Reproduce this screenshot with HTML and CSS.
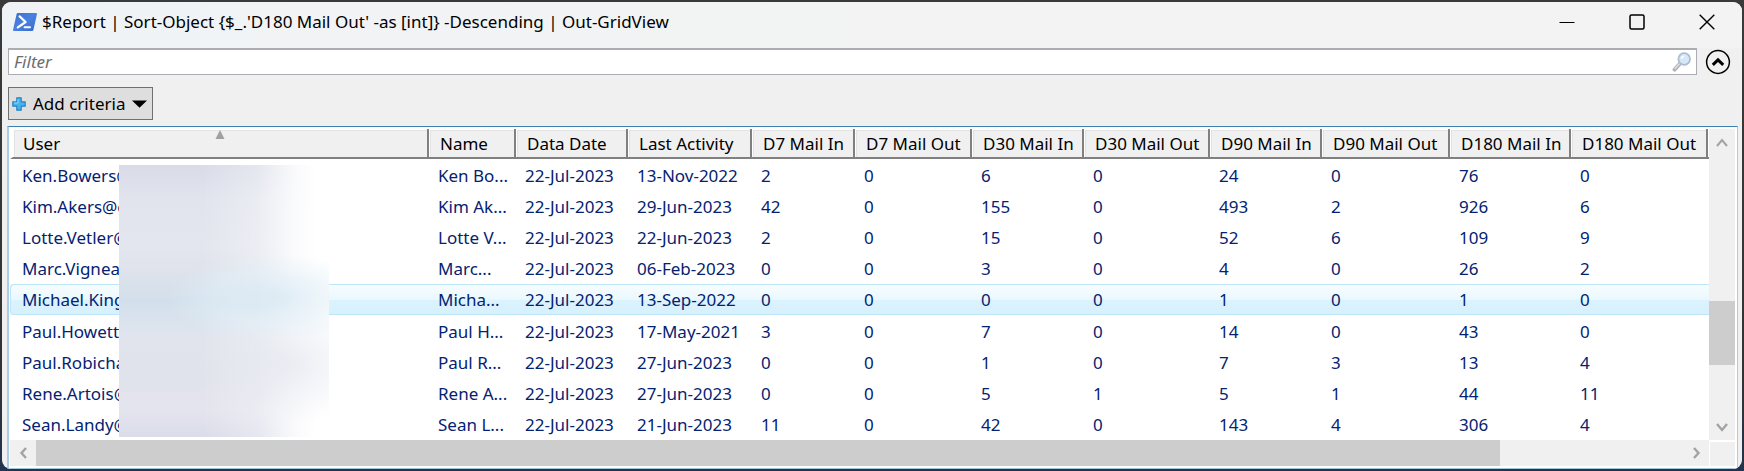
FILE: index.html
```html
<!DOCTYPE html>
<html lang="en">
<head>
<meta charset="utf-8">
<title>Out-GridView</title>
<link rel="stylesheet" href="styles.css">
</head>
<body>
<main class="window">
  <header class="titlebar">
    <svg class="app-icon" width="24" height="18" viewBox="0 0 24 18" aria-hidden="true">
      <defs><linearGradient id="ps" x1="0" y1="0" x2="1" y2="1"><stop offset="0" stop-color="#3c6fd0"/><stop offset="0.5" stop-color="#4a82e2"/><stop offset="1" stop-color="#3568c8"/></linearGradient></defs>
      <path d="M4.6 0H23.2Q24.2 0 24 1L20.4 17Q20.2 18 19.2 18H0.8Q-0.2 18 0 17L3.6 1Q3.8 0 4.6 0Z" fill="url(#ps)"/>
      <path d="M6.6 3.4L12.6 9L4.8 14.4" fill="none" stroke="#fff" stroke-width="2.2" stroke-linecap="round" stroke-linejoin="round"/>
      <path d="M11.6 14.2H17" stroke="#fff" stroke-width="2" stroke-linecap="round"/>
    </svg>
    <h1 class="title">$Report | Sort-Object {$_.'D180 Mail Out' -as [int]} -Descending | Out-GridView</h1>
    <div class="caption-buttons">
      <button class="caption" aria-label="Minimize"><svg width="16" height="16" viewBox="0 0 16 16"><path d="M0.5 8.5H15.5" stroke="#000" stroke-width="1.2"/></svg></button>
      <button class="caption" aria-label="Maximize"><svg width="16" height="16" viewBox="0 0 16 16"><rect x="1" y="1" width="14" height="14" rx="1.5" fill="none" stroke="#000" stroke-width="1.5"/></svg></button>
      <button class="caption" aria-label="Close"><svg width="16" height="16" viewBox="0 0 16 16"><path d="M0.7 0.7L15.3 15.3M15.3 0.7L0.7 15.3" stroke="#000" stroke-width="1.4"/></svg></button>
    </div>
  </header>

  <section class="filter-row">
    <div class="filter-box">
      <input class="filter" type="text" placeholder="Filter" aria-label="Filter">
      <svg class="lens" width="20" height="20" viewBox="0 0 20 20" aria-hidden="true">
        <path d="M2.6 17.6L7.6 12" stroke="#b4b4b8" stroke-width="4" stroke-linecap="round"/>
        <path d="M3 16.6L8.4 10.8" stroke="#dededf" stroke-width="1.4" stroke-linecap="round"/>
        <circle cx="12.2" cy="7" r="5.8" fill="#d5e8fa" stroke="#aebccb" stroke-width="1.8"/>
        <path d="M8.8 7Q9 3.6 12.4 3.4Q12 6 8.8 7Z" fill="#fff"/>
      </svg>
    </div>
    <button class="expander" aria-label="Collapse query panel"><svg width="26" height="26" viewBox="0 0 26 26"><circle cx="13" cy="13" r="11.4" fill="none" stroke="#000" stroke-width="1.5"/><path d="M7.8 15.8L13 10.8L18.2 15.8" fill="none" stroke="#000" stroke-width="3"/></svg></button>
  </section>

  <section class="criteria-row">
    <button class="criteria">
      <svg width="14" height="14" viewBox="0 0 14 14" aria-hidden="true"><path d="M4.8 0.8H9.2V4.8H13.2V9.2H9.2V13.2H4.8V9.2H0.8V4.8H4.8Z" fill="#45b4ee" stroke="#2584c4" stroke-width="1.2" stroke-linejoin="round"/><path d="M6 2V6H2" fill="none" stroke="#8bd4f8"/></svg>
      <span>Add criteria</span>
      <svg width="15" height="8" viewBox="0 0 15 8" aria-hidden="true"><path d="M0 0.4H15L7.5 7.8Z" fill="#000"/></svg>
    </button>
  </section>

  <section class="grid">
    <div class="viewport">
      <table class="table">
        <colgroup><col class="c-user"><col class="c-name"><col class="c-date"><col class="c-last"><col class="c-d7i"><col class="c-d7o"><col class="c-in"><col class="c-out"><col class="c-in"><col class="c-d90o"><col class="c-d180i"><col class="c-d180o"><col></colgroup>
        <thead><tr><th>User<svg class="sort" width="10" height="9" viewBox="0 0 10 9" aria-hidden="true"><path d="M5 0L9.5 9H0.5Z" fill="#a0a0a0"/></svg></th><th>Name</th><th>Data Date</th><th>Last Activity</th><th>D7 Mail In</th><th>D7 Mail Out</th><th>D30 Mail In</th><th>D30 Mail Out</th><th>D90 Mail In</th><th>D90 Mail Out</th><th>D180 Mail In</th><th>D180 Mail Out</th><td class="rest"></td></tr></thead>
        <tbody>
        <tr><td>Ken.Bowers@</td><td>Ken Bo...</td><td>22-Jul-2023</td><td>13-Nov-2022</td><td>2</td><td>0</td><td>6</td><td>0</td><td>24</td><td>0</td><td>76</td><td>0</td><td></td></tr>
        <tr><td>Kim.Akers@c</td><td>Kim Ak...</td><td>22-Jul-2023</td><td>29-Jun-2023</td><td>42</td><td>0</td><td>155</td><td>0</td><td>493</td><td>2</td><td>926</td><td>6</td><td></td></tr>
        <tr><td>Lotte.Vetler@</td><td>Lotte V...</td><td>22-Jul-2023</td><td>22-Jun-2023</td><td>2</td><td>0</td><td>15</td><td>0</td><td>52</td><td>6</td><td>109</td><td>9</td><td></td></tr>
        <tr><td>Marc.Vignea</td><td>Marc...</td><td>22-Jul-2023</td><td>06-Feb-2023</td><td>0</td><td>0</td><td>3</td><td>0</td><td>4</td><td>0</td><td>26</td><td>2</td><td></td></tr>
        <tr class="hover"><td>Michael.King</td><td>Micha...</td><td>22-Jul-2023</td><td>13-Sep-2022</td><td>0</td><td>0</td><td>0</td><td>0</td><td>1</td><td>0</td><td>1</td><td>0</td><td></td></tr>
        <tr><td>Paul.Howett@</td><td>Paul H...</td><td>22-Jul-2023</td><td>17-May-2021</td><td>3</td><td>0</td><td>7</td><td>0</td><td>14</td><td>0</td><td>43</td><td>0</td><td></td></tr>
        <tr><td>Paul.Robicha</td><td>Paul R...</td><td>22-Jul-2023</td><td>27-Jun-2023</td><td>0</td><td>0</td><td>1</td><td>0</td><td>7</td><td>3</td><td>13</td><td>4</td><td></td></tr>
        <tr><td>Rene.Artois@</td><td>Rene A...</td><td>22-Jul-2023</td><td>27-Jun-2023</td><td>0</td><td>0</td><td>5</td><td>1</td><td>5</td><td>1</td><td>44</td><td>11</td><td></td></tr>
        <tr><td>Sean.Landy@</td><td>Sean L...</td><td>22-Jul-2023</td><td>21-Jun-2023</td><td>11</td><td>0</td><td>42</td><td>0</td><td>143</td><td>4</td><td>306</td><td>4</td><td></td></tr>
        </tbody>
      </table>
      <div class="redaction"></div>
    </div>
    <div class="vscroll">
      <button class="arrow" aria-label="Scroll up"><svg width="12" height="9" viewBox="0 0 12 9"><path d="M1 8L6 2L11 8" fill="none" stroke="#a3a3a3" stroke-width="2"/></svg></button>
      <div class="vtrack"><div class="vbefore"></div><div class="vthumb"></div><div class="vafter"></div></div>
      <button class="arrow" aria-label="Scroll down"><svg width="12" height="9" viewBox="0 0 12 9"><path d="M1 1L6 7L11 1" fill="none" stroke="#a3a3a3" stroke-width="2.4"/></svg></button>
    </div>
    <div class="hscroll">
      <button class="arrow" aria-label="Scroll left"><svg width="9" height="12" viewBox="0 0 9 12"><path d="M7 1L2.5 6L7 11" fill="none" stroke="#a3a3a3" stroke-width="2.4"/></svg></button>
      <div class="htrack"><div class="hthumb"></div><div class="hafter"></div></div>
      <button class="arrow" aria-label="Scroll right"><svg width="9" height="12" viewBox="0 0 9 12"><path d="M2 1L6.5 6L2 11" fill="none" stroke="#a3a3a3" stroke-width="2.4"/></svg></button>
    </div>
    <div class="corner"></div>
  </section>
</main>
</body>
</html>
```
FILE: styles.css
```css
* { box-sizing: border-box; }

body {
  margin: 0;
  height: 100vh;
  padding: 2px;
  display: flex;
  background: linear-gradient(#3a3a3a, #333 80%, #22324f);
  font-family: "Noto Sans", "Open Sans", sans-serif;
  font-size: 17px;
  line-height: 24px;
  color: #000;
}

button {
  margin: 0;
  padding: 0;
  border: 0;
  background: none;
  font: inherit;
  color: inherit;
  display: flex;
  align-items: center;
  justify-content: center;
}

.window {
  flex: 1;
  min-width: 0;
  display: flex;
  flex-direction: column;
  background: #f0f0f0;
  border-radius: 9px;
  overflow: hidden;
}

.titlebar {
  height: 46px;
  padding: 0 0 6px 11px;
  display: flex;
  align-items: center;
  background: linear-gradient(90deg, #f0f3f6, #f3f3f3 50%);
}
.title {
  margin: 0 0 0 5px;
  flex: 1;
  font-size: 17px;
  font-weight: 400;
  white-space: nowrap;
}
.caption-buttons { display: flex; }
.caption { width: 70px; height: 40px; }

.filter-row {
  padding: 0 11px 0 6px;
  display: flex;
  align-items: center;
  gap: 8px;
}
.filter-box {
  flex: 1;
  height: 27px;
  display: flex;
  align-items: center;
  padding-right: 4px;
  background: #fff;
  border: 1px solid #abadb3;
  border-top-width: 2px;
}
.filter {
  flex: 1;
  min-width: 0;
  padding: 0 5px;
  border: 0;
  outline: 0;
  background: transparent;
  font: italic 17px/24px "Noto Sans", "Open Sans", sans-serif;
}
.filter::placeholder { color: #6d6d6d; opacity: 1; }

.criteria-row { padding: 12px 6px 6px; display: flex; }
.criteria {
  height: 33px;
  padding: 0 5px 0 3px;
  gap: 7px;
  background: #dedede;
  border: 1px solid #707070;
}

.grid {
  flex: 1;
  min-height: 0;
  margin: 0 4px 0 5px;
  padding: 2px 2px 2px 1px;
  display: grid;
  grid-template-columns: minmax(0, 1fr) 26px;
  grid-template-rows: minmax(0, 1fr) 26px;
  background: #fff;
  border: 1px solid #a9cde4;
  border-top: 1px solid #3c7fb1;
  border-left-width: 2px;
  border-bottom-color: #9fc6dc;
}
.viewport { position: relative; overflow: hidden; }

.table {
  width: 100%;
  height: 100%;
  table-layout: fixed;
  border-collapse: separate;
  border-spacing: 0;
}
.c-user { width: 419px; }
.c-name { width: 87px; }
.c-date, .c-in { width: 112px; }
.c-last { width: 124px; }
.c-d7i { width: 103px; }
.c-d7o { width: 117px; }
.c-out { width: 126px; }
.c-d90o { width: 128px; }
.c-d180i { width: 121px; }
.c-d180o { width: 137px; }

.table th {
  position: relative;
  height: 30px;
  padding: 2px 0 0 11px;
  font-weight: 400;
  text-align: left;
  white-space: nowrap;
  background: #f0f0f0;
  border-right: 2px solid #808080;
  border-bottom: 2px solid #808080;
  box-shadow: inset 1px 1px #fff, inset 2px 2px #e3e3e3;
}
.table th:first-child {
  padding-left: 10px;
  border-left: 3px solid #fff;
}
.sort { position: absolute; top: 1px; left: 50%; margin-left: -5px; }

.table td {
  height: 31px;
  padding: 2px 0 0 9px;
  color: #042271;
  white-space: nowrap;
  overflow: hidden;
}
.table td:first-child { padding-left: 12px; }
.table .rest { height: 30px; padding: 0; border-bottom: 2px solid #808080; }
.hover td {
  background: linear-gradient(#f8fdff, #eaf8fe 50%, #dcf3fd 51%, #d5f0fd);
  box-shadow: inset 0 1px #bee6f7, inset 0 -1px #bee6f7;
}
.hover td:first-child {
  border-radius: 4px 0 0 4px;
  box-shadow: inset 1px 1px #bee6f7, inset 0 -1px #bee6f7;
}

/* Blurred patch over the mail domains */
.redaction {
  position: absolute;
  top: 36px;
  bottom: 3px;
  left: 109px;
  width: 210px;
  background:
    radial-gradient(ellipse 110px 44px at 74% 49%, rgba(217, 233, 243, 0.8), rgba(226, 240, 248, 0.45) 60%, transparent),
    radial-gradient(ellipse 90px 60px at 80% 73%, rgba(228, 230, 239, 0.7), transparent),
    linear-gradient(90deg, transparent 40%, rgba(255, 255, 255, 0.3) 66%, rgba(255, 255, 255, 0.85) 84%, #fff 94%),
    linear-gradient(#d9dce8, #e1e4ed 12%, #e4e6ef 30%, #dfe3ec 38%, #d2dfeb 50%, #dae3ed 57%, #e2e4ed 65%, #e1e3ec 80%, #e4e4ee 90%, #dadde9);
}

.vscroll { display: flex; flex-direction: column; background: #f0f0f0; }
.vscroll .arrow { height: 26px; }
.vtrack { flex: 1; display: flex; flex-direction: column; }
.vbefore { flex: 146; }
.vthumb { flex: 64; background: #cdcdcd; }
.vafter { flex: 49; }

.hscroll { display: flex; background: #f0f0f0; }
.hscroll .arrow { width: 26px; }
.htrack { flex: 1; display: flex; }
.hthumb { flex: 1464; background: #cdcdcd; }
.hafter { flex: 183; }

.corner { margin: 2px 0 0 1px; background: #f0f0f0; }
```
